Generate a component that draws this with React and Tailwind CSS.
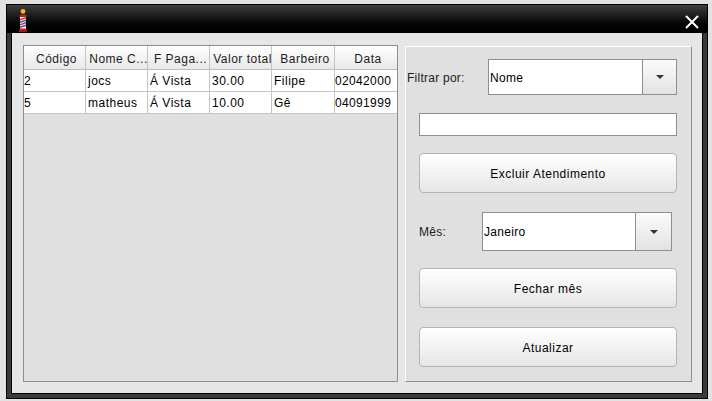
const COLUMNS = [
  { label: "Código", width: "w-[62px]" },
  { label: "Nome C...", width: "w-[62px]" },
  { label: "F Paga...", width: "w-[62px]" },
  { label: "Valor total", width: "w-[62px]" },
  { label: "Barbeiro", width: "w-[63px]" },
  { label: "Data", width: "w-[62px]" },
];

const ROWS = [
  ["2", "jocs", "Á Vista", "30.00", "Filipe", "02042000"],
  ["5", "matheus", "Á Vista", "10.00", "Gê", "04091999"],
];

function BarberPole() {
  return (
    <svg width="8" height="23" viewBox="0 0 8 23" className="block">
      <circle cx="4" cy="2.4" r="2.4" fill="#f4b81e" />
      <rect x="2" y="5" width="4" height="1" fill="#7a1616" />
      <rect x="0.5" y="6" width="7" height="2" fill="#c8201f" />
      <rect x="1" y="8" width="6" height="12" fill="#f1f1f1" />
      <path d="M1 10 L7 8 V9.5 L1 11.5 Z" fill="#d03030" />
      <path d="M1 12.5 L7 10.5 V12 L1 14 Z" fill="#3657b8" />
      <path d="M1 15 L7 13 V14.5 L1 16.5 Z" fill="#d03030" />
      <path d="M1 17.5 L7 15.5 V17 L1 19 Z" fill="#3657b8" />
      <rect x="0.5" y="19.5" width="7" height="1.5" fill="#c8201f" />
      <rect x="0" y="21" width="8" height="2" fill="#a01818" />
    </svg>
  );
}

function Combo({ value, className, arrowWidth }) {
  return (
    <div className={`flex bg-white border border-[#8e8e8e] ${className}`}>
      <div className="flex-1 flex items-center pl-px text-black tracking-[0.3px]">{value}</div>
      <div className={`${arrowWidth} flex items-center justify-center border-l border-[#8e8e8e] bg-gradient-to-b from-[#fbfbfb] to-[#e3e3e3]`}>
        <div className="w-0 h-0 border-l-[4px] border-r-[4px] border-t-[4px] border-l-transparent border-r-transparent border-t-[#333333]" />
      </div>
    </div>
  );
}

function ActionButton({ children, className }) {
  return (
    <button className={`w-[258px] h-10 ml-[13px] pt-0.5 rounded-[4px] border border-[#b4b4b4] bg-gradient-to-b from-[#ffffff] to-[#e6e6e6] text-black tracking-[0.5px] ${className}`}>
      {children}
    </button>
  );
}

export default function App() {
  return (
    <div className="w-[712px] h-[401px] bg-[#e2e2e2] pt-1 pl-1.5 text-[12px] font-['Liberation_Sans',Arial,sans-serif]">
      <div className="w-[702px] h-[395px] flex flex-col border border-black bg-[#3a3a3a]">
        <div className="h-[28px] flex items-center justify-between pl-3 pr-[8px] bg-gradient-to-b from-[#3f3f3f] to-[#000000]">
          <div className="mt-[3px]">
            <BarberPole />
          </div>
          <svg width="14" height="14" viewBox="0 0 14 14" className="mt-[5px]">
            <path d="M1 1 L13 13 M13 1 L1 13" stroke="#ffffff" strokeWidth="2" />
          </svg>
        </div>

        <div className="flex-1 mx-1 mb-1 flex border border-black border-t-0 bg-[#e6e6e6] pl-[11px] pt-3">
          <div className="w-[375px] h-[337px] border border-[#8e8e8e] bg-[#e0e0e0]">
            <div className="flex h-[24px] border-b border-[#bdbdbd]">
              {COLUMNS.map((col) => (
                <div
                  key={col.label}
                  className={`${col.width} shrink-0 flex items-center justify-center pt-0.5 pl-1 overflow-hidden whitespace-nowrap border-r border-[#c4c4c4] bg-gradient-to-b from-[#ffffff] to-[#e8e8e8] text-[#1c1c1c] tracking-[0.5px] last:border-r-0`}
                >
                  {col.label}
                </div>
              ))}
            </div>
            {ROWS.map((row) => (
              <div key={row[0]} className="flex h-[22px] bg-white border-b border-[#c4c4c4]">
                {row.map((cell, i) => (
                  <div
                    key={i}
                    className={`${COLUMNS[i].width} shrink-0 flex items-center pl-0.5 whitespace-nowrap border-r border-[#c4c4c4] text-black tracking-[0.5px] first:pl-0 last:pl-0 last:tracking-[0.35px] last:border-r-0`}
                  >
                    {cell}
                  </div>
                ))}
              </div>
            ))}
          </div>

          <div className="w-[287px] h-[336px] ml-[7px] mt-px flex flex-col items-start bg-[#e0e0e0] border-t border-l border-t-white border-l-white border-r border-b border-r-[#8e8e8e] border-b-[#8e8e8e] pt-3">
            <div className="flex items-center h-[36px] pl-[1px] text-[#1c1c1c]">
              <span className="w-[81px] pt-0.5 tracking-[0.25px]">Filtrar por:</span>
              <Combo value="Nome" className="w-[189px] h-[36px] pt-0.5" arrowWidth="w-[34px] -mt-0.5" />
            </div>
            <div className="w-[258px] h-[23px] ml-[13px] mt-[18px] bg-white border border-[#8e8e8e]" />
            <ActionButton className="mt-[17px]">Excluir Atendimento</ActionButton>
            <div className="flex items-center h-[39px] ml-[13px] mt-[19px] text-[#1c1c1c]">
              <span className="w-[63px] tracking-[0.25px]">Mês:</span>
              <Combo value="Janeiro" className="w-[190px] h-[39px]" arrowWidth="w-[36px]" />
            </div>
            <ActionButton className="mt-[17px]">Fechar mês</ActionButton>
            <ActionButton className="mt-[19px]">Atualizar</ActionButton>
          </div>
        </div>
      </div>
    </div>
  );
}
